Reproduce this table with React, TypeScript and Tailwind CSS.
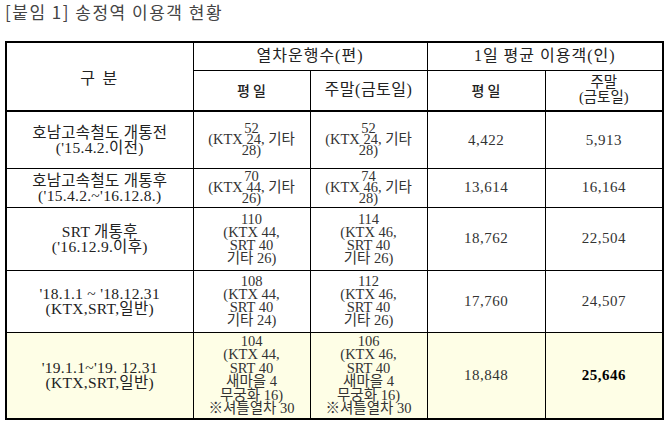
import React from 'react';

const serif = { fontFamily: '"Liberation Serif", "Noto Sans CJK KR", serif' };
const sans = { fontFamily: '"Noto Sans CJK KR", sans-serif' };

type Row = {
  label: string[];
  weekdayTrains: string[];
  weekendTrains: string[];
  weekday: string;
  weekend: string;
  h: string;
  lead: string;
  hl?: boolean;
};

const rows: Row[] = [
  {
    label: ['호남고속철도 개통전', "('15.4.2.이전)"],
    weekdayTrains: ['52', '(KTX 24, 기타', '28)'],
    weekendTrains: ['52', '(KTX 24, 기타', '28)'],
    weekday: '4,422',
    weekend: '5,913',
    h: 'h-[57px]',
    lead: 'leading-[11px]',
  },
  {
    label: ['호남고속철도 개통후', "('15.4.2.~'16.12.8.)"],
    weekdayTrains: ['70', '(KTX 44, 기타', '26)'],
    weekendTrains: ['74', '(KTX 46, 기타', '28)'],
    weekday: '13,614',
    weekend: '16,164',
    h: 'h-[39px]',
    lead: 'leading-[11px]',
  },
  {
    label: ['SRT 개통후', "('16.12.9.이후)"],
    weekdayTrains: ['110', '(KTX 44,', 'SRT 40', '기타 26)'],
    weekendTrains: ['114', '(KTX 46,', 'SRT 40', '기타 26)'],
    weekday: '18,762',
    weekend: '22,504',
    h: 'h-[63px]',
    lead: 'leading-[13px]',
  },
  {
    label: ["'18.1.1 ~ '18.12.31", '(KTX,SRT,일반)'],
    weekdayTrains: ['108', '(KTX 44,', 'SRT 40', '기타 24)'],
    weekendTrains: ['112', '(KTX 46,', 'SRT 40', '기타 26)'],
    weekday: '17,760',
    weekend: '24,507',
    h: 'h-[62px]',
    lead: 'leading-[13px]',
  },
  {
    label: ["'19.1.1~'19. 12.31", '(KTX,SRT,일반)'],
    weekdayTrains: ['104', '(KTX 44,', 'SRT 40', '새마을 4', '무궁화 16)', '※셔틀열차 30'],
    weekendTrains: ['106', '(KTX 46,', 'SRT 40', '새마을 4', '무궁화 16)', '※셔틀열차 30'],
    weekday: '18,848',
    weekend: '25,646',
    h: 'h-[87px]',
    lead: 'leading-[13.5px]',
    hl: true,
  },
];

const Lines = ({ items, lead }: { items: string[]; lead: string }) => (
  <div className={`flex flex-col items-center ${lead}`}>
    {items.map((t, i) => (
      <span key={i} className="whitespace-nowrap">{t}</span>
    ))}
  </div>
);

export default function App() {
  return (
    <div className="w-[672px] h-[429px] bg-white text-[#222] overflow-hidden">
      <h1 className="pl-[5px] text-[17px] leading-[24px] tracking-[1.5px] font-normal text-[#444]" style={sans}>
        [붙임 1] 송정역 이용객 현황
      </h1>
      <table
        className="ml-[5px] mt-[17px] border-collapse border-2 border-black table-fixed text-[14.5px] text-center"
        style={serif}
      >
        <colgroup>
          <col className="w-[187px]" />
          <col className="w-[117px]" />
          <col className="w-[117px]" />
          <col className="w-[118px]" />
          <col className="w-[118px]" />
        </colgroup>
        <thead>
          <tr className="h-[28px]">
            <th rowSpan={2} className="border border-black border-b-2 font-normal text-[16px] tracking-[2px]" style={sans}>
              구 분
            </th>
            <th colSpan={2} className="border border-black font-normal text-[16px] tracking-[1px]">열차운행수(편)</th>
            <th colSpan={2} className="border border-black font-normal text-[16px] tracking-[1px]">1일 평균 이용객(인)</th>
          </tr>
          <tr className="h-[41px]">
            <th className="border border-black border-b-2 font-medium text-[14px]" style={sans}>평 일</th>
            <th className="border border-black border-b-2 font-normal text-[16px] tracking-[0.5px]">주말(금토일)</th>
            <th className="border border-black border-b-2 font-medium text-[14px]" style={sans}>평 일</th>
            <th className="border border-black border-b-2 font-normal text-[14.5px] leading-[15px]">
              주말
              <br />
              (금토일)
            </th>
          </tr>
        </thead>
        <tbody>
          {rows.map((r, i) => (
            <tr key={i} className={`${r.h} ${r.hl ? 'bg-[#fefee6]' : ''}`}>
              <td className="border border-black text-[15.5px] tracking-[0.3px] leading-[15px]">
                {r.label.map((t, j) => (
                  <div key={j} className="whitespace-nowrap">{t}</div>
                ))}
              </td>
              <td className="border border-black text-[#333]">
                <Lines items={r.weekdayTrains} lead={r.lead} />
              </td>
              <td className="border border-black text-[#333]">
                <Lines items={r.weekendTrains} lead={r.lead} />
              </td>
              <td className="border border-black text-[#333] text-[15px] tracking-[0.5px]">{r.weekday}</td>
              <td className={`border border-black text-[15px] tracking-[0.5px] ${r.hl ? 'font-semibold text-black' : 'text-[#333]'}`}>{r.weekend}</td>
            </tr>
          ))}
        </tbody>
      </table>
    </div>
  );
}
